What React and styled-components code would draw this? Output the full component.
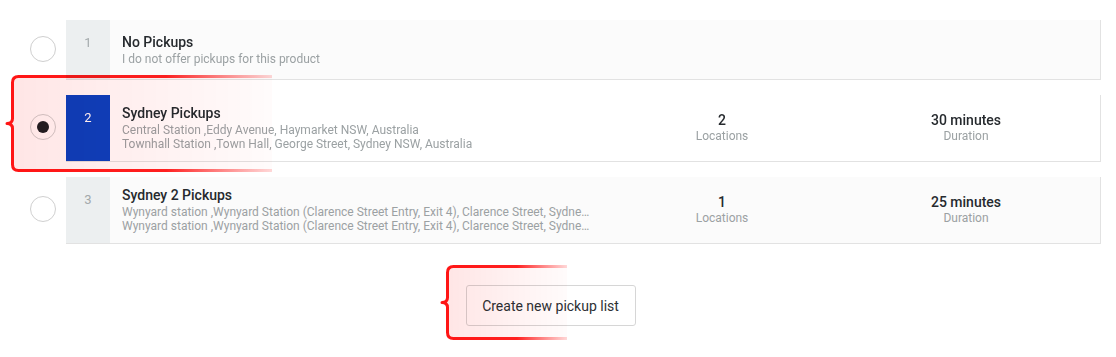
import React, { useId } from 'react';
import styled, { createGlobalStyle } from 'styled-components';

const GlobalStyle = createGlobalStyle`
  body {
    margin: 0;
    background: #ffffff;
    font-family: Roboto, "Liberation Sans", Arial, sans-serif;
  }
`;

const Page = styled.div`
  width: 1101px;
  min-height: 357px;
  box-sizing: border-box;
  padding: 20px 0 20px;
`;

const RowWrap = styled.div`
  position: relative;
  display: flex;
  align-items: center;
  gap: 10px;
  padding-left: 30px;
  margin-bottom: 15px;
`;

const Radio = styled.div`
  flex: none;
  width: 26px;
  height: 26px;
  box-sizing: border-box;
  border-radius: 50%;
  border: 1px solid #cfcfcf;
  background: #ffffff;
  display: flex;
  align-items: center;
  justify-content: center;
  margin-top: -3px;
  &::after {
    content: '';
    width: 12px;
    height: 12px;
    border-radius: 50%;
    background: #231f24;
    display: ${(p) => (p.checked ? 'block' : 'none')};
  }
`;

const Card = styled.div`
  flex: 1;
  display: flex;
  min-height: 59px;
  background: ${(p) => (p.active ? '#ffffff' : '#fbfbfb')};
  border-right: 1px solid #e2e2e2;
  border-bottom: 1px solid #e2e2e2;
`;

const Num = styled.div`
  flex: none;
  width: 44px;
  box-sizing: border-box;
  padding-top: 15px;
  text-align: center;
  font-size: 13px;
  line-height: 15px;
  color: ${(p) => (p.active ? '#ffffff' : '#a3a9ab')};
  background: ${(p) => (p.active ? '#1041c3' : '#eceff0')};
`;

const Info = styled.div`
  flex: none;
  width: 490px;
  box-sizing: border-box;
  padding: 10px 10px 10px 12px;
  display: flex;
  flex-direction: column;
  justify-content: center;
  min-width: 0;
`;

const Title = styled.div`
  font-size: 14px;
  line-height: 17px;
  font-weight: 500;
  color: #262a2e;
  margin-bottom: 1px;
`;

const Sub = styled.div`
  font-size: 12px;
  line-height: 14px;
  color: #9ba1a3;
  white-space: nowrap;
  overflow: hidden;
  text-overflow: ellipsis;
`;

const Stat = styled.div`
  flex: none;
  width: 244px;
  display: flex;
  flex-direction: column;
  justify-content: center;
  align-items: center;
`;

const StatValue = styled.div`
  font-size: 14px;
  line-height: 17px;
  font-weight: 500;
  color: #262a2e;
`;

const StatLabel = styled.div`
  font-size: 12px;
  line-height: 15px;
  color: #9ba1a3;
`;

const Footer = styled.div`
  display: flex;
  justify-content: center;
  padding-top: 26px;
`;

const ButtonWrap = styled.div`
  position: relative;
`;

const Button = styled.button`
  display: block;
  width: 170px;
  height: 41px;
  background: #ffffff;
  border: 1px solid #d6d6d6;
  border-radius: 3px;
  font-family: Roboto, "Liberation Sans", Arial, sans-serif;
  font-size: 14px;
  color: #2d3034;
  cursor: pointer;
`;

const Mark = styled.svg`
  position: absolute;
  left: ${(p) => p.$left}px;
  top: ${(p) => p.$top}px;
  pointer-events: none;
  overflow: visible;
  mix-blend-mode: darken;
`;

// red bracket annotation drawn over the highlighted item
function Bracket({ left, top, w, h }) {
  const id = useId().replace(/:/g, '');
  const x = 8.5;
  const t = 2.5;
  const b = h - 2.5;
  const m = h / 2;
  const r = 6;
  const d = `M ${w} ${t} L ${x + r} ${t} Q ${x} ${t} ${x} ${t + r} L ${x} ${m - 5} Q ${x} ${m} 3 ${m} Q ${x} ${m} ${x} ${m + 5} L ${x} ${b - r} Q ${x} ${b} ${x + r} ${b} L ${w} ${b}`;
  return (
    <Mark $left={left} $top={top} width={w} height={h} viewBox={`0 0 ${w} ${h}`}>
      <defs>
        <linearGradient id={`s${id}`} x1="0" x2="1" y1="0" y2="0">
          <stop offset="0" stopColor="#ff1414" />
          <stop offset="0.6" stopColor="#ff2020" />
          <stop offset="1" stopColor="#ff4040" stopOpacity="0.2" />
        </linearGradient>
        <linearGradient id={`f${id}`} x1="0" x2="1" y1="0" y2="0">
          <stop offset="0" stopColor="#ff0000" stopOpacity="0.1" />
          <stop offset="1" stopColor="#ff0000" stopOpacity="0.015" />
        </linearGradient>
      </defs>
      <rect x={x} y={t} width={w - x} height={b - t} fill={`url(#f${id})`} />
      <path d={d} fill="none" stroke={`url(#s${id})`} strokeWidth="3" strokeLinejoin="round" />
    </Mark>
  );
}

const rows = [
  {
    n: 1,
    title: 'No Pickups',
    lines: ['I do not offer pickups for this product'],
  },
  {
    n: 2,
    title: 'Sydney Pickups',
    lines: [
      'Central Station ,Eddy Avenue, Haymarket NSW, Australia',
      'Townhall Station ,Town Hall, George Street, Sydney NSW, Australia',
    ],
    locations: 2,
    duration: '30 minutes',
  },
  {
    n: 3,
    title: 'Sydney 2 Pickups',
    lines: [
      'Wynyard station ,Wynyard Station (Clarence Street Entry, Exit 4), Clarence Street, Sydney NSW, Australia',
      'Wynyard station ,Wynyard Station (Clarence Street Entry, Exit 4), Clarence Street, Sydney NSW, Australia',
    ],
    locations: 1,
    duration: '25 minutes',
  },
];

export default function App() {
  const selected = 2;
  return (
    <>
      <GlobalStyle />
      <Page>
        {rows.map((row) => {
          const active = row.n === selected;
          return (
            <RowWrap key={row.n}>
              <Radio checked={active} />
              <Card active={active}>
                <Num active={active}>{row.n}</Num>
                <Info>
                  <Title>{row.title}</Title>
                  {row.lines.map((l, i) => (
                    <Sub key={i}>{l}</Sub>
                  ))}
                </Info>
                {row.locations && (
                  <>
                    <Stat>
                      <StatValue>{row.locations}</StatValue>
                      <StatLabel>Locations</StatLabel>
                    </Stat>
                    <Stat>
                      <StatValue>{row.duration}</StatValue>
                      <StatLabel>Duration</StatLabel>
                    </Stat>
                  </>
                )}
              </Card>
              {active && <Bracket left={4} top={-21} w={268} h={99} />}
            </RowWrap>
          );
        })}
        <Footer>
          <ButtonWrap>
            <Button>Create new pickup list</Button>
            <Bracket left={-27} top={-21} w={128} h={77} />
          </ButtonWrap>
        </Footer>
      </Page>
    </>
  );
}
